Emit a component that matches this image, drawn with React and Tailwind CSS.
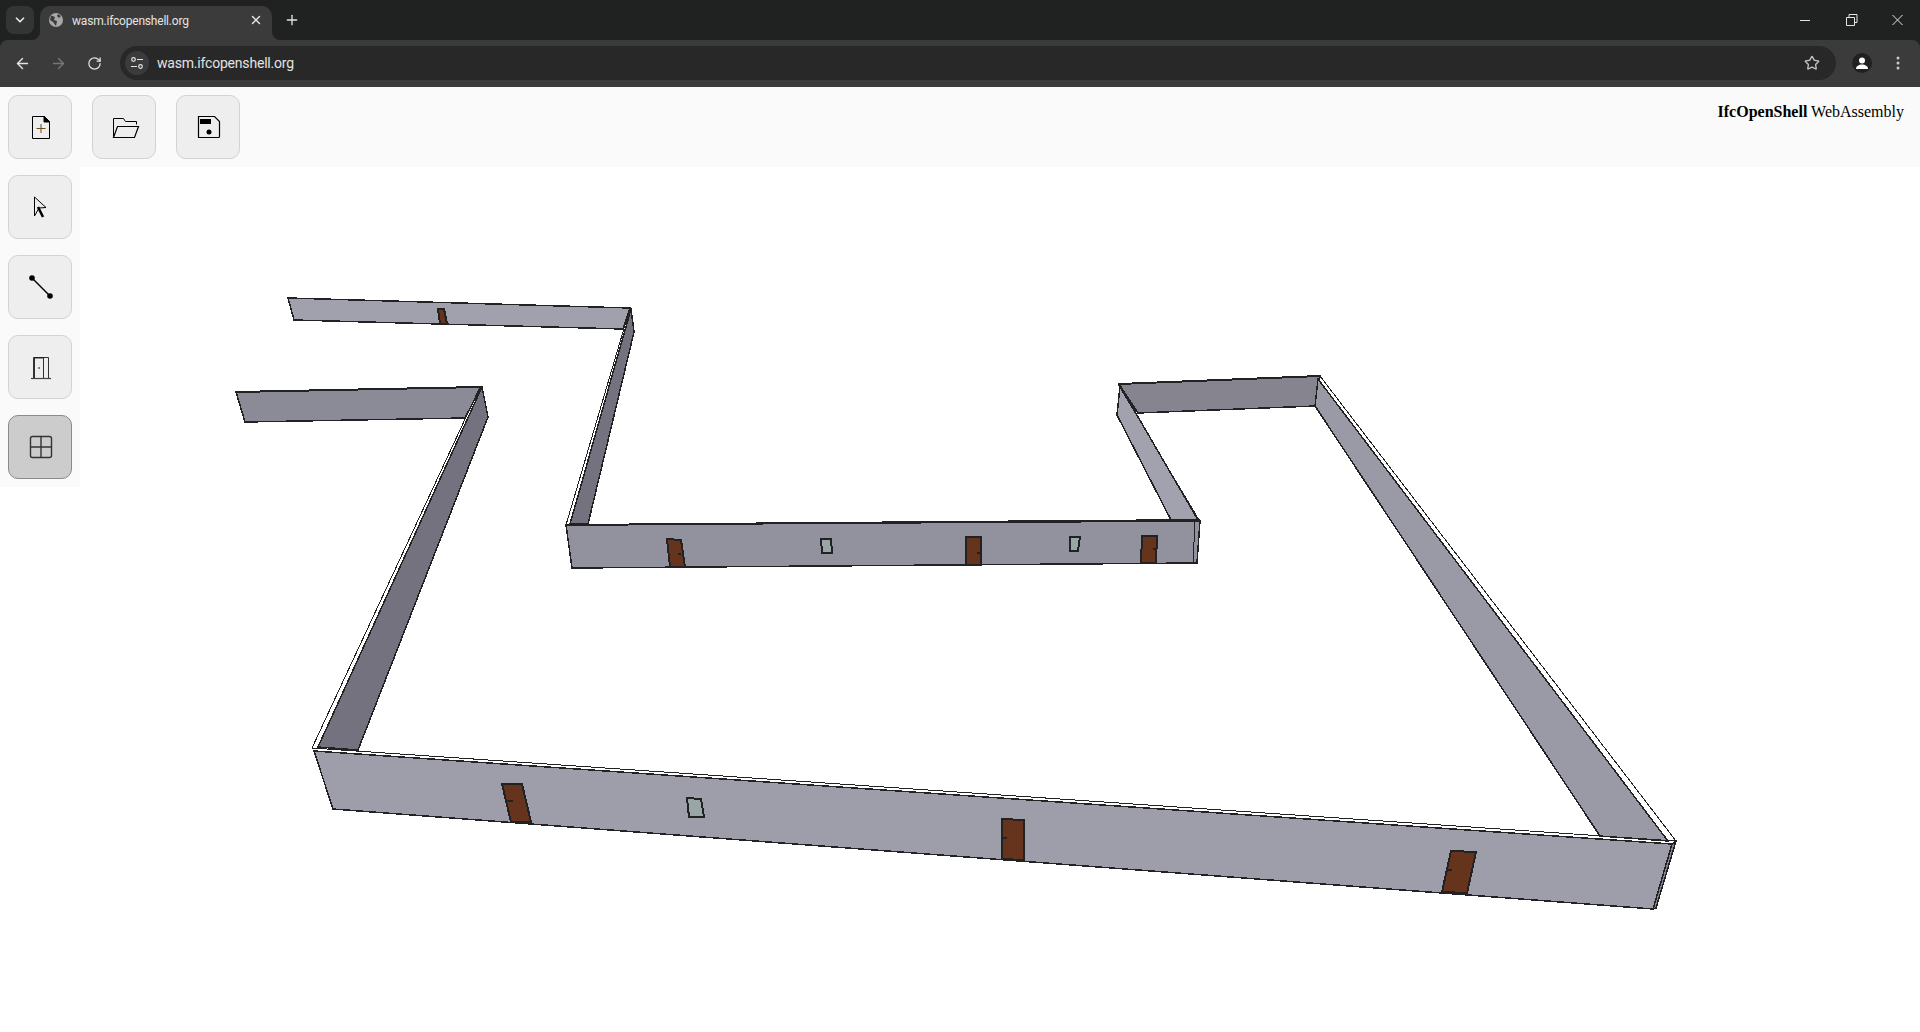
import {
  ArrowLeft,
  ArrowRight,
  ChevronDown,
  Plus,
  RotateCw,
  Star,
  X,
} from "lucide-react";

// wall faces of the model, drawn back to front
const walls = [
  { points: "288,298 294,320 623,329 630,308", fill: "#a1a0ad" },
  { points: "631,309 634,332 588,524 570,524", fill: "#73727e" },
  { points: "236,392 245,422 465,418 481,387", fill: "#8b8a97" },
  { points: "482,387 488,417 358,750 318,747", fill: "#73727e" },
  { points: "1119,384 1320,376 1315,406 1138,413", fill: "#85848f" },
  { points: "1120,386 1117,415 1171,520 1198,520", fill: "#a2a1ae" },
  { points: "1318,379 1315,406 1600,836 1668,841", fill: "#9a99a6" },
  { points: "566,525 572,568 1197,563 1200,521", fill: "#92919e" },
  { points: "314,751 1672,844 1653,909 333,809", fill: "#9e9daa" },
  { points: "1672,844 1676,841 1656,908 1653,909", fill: "#82818d" },
];

// outer edges, the sliver next to them stays white
const edges = [
  [630, 308, 566, 525, 1],
  [480, 387, 312, 748, 1],
  [1118, 384, 1199, 520, 1],
  [1320, 376, 1676, 841, 1],
  [312, 748, 1676, 841, 1],
  [1195, 522, 1193, 563, 1],
  [566, 525, 1200, 520, 2],
  [236, 392, 481, 387, 2],
  [1119, 384, 1320, 376, 2],
];

const doors = [
  { points: "438,309 444,309 447,324 440,324", handle: null },
  { points: "667,539 681,540 685,567 670,567", handle: [678, 554, 681, 554] },
  { points: "966,537 981,537 981,565 966,565", handle: [977, 553, 980, 553] },
  { points: "1142,536 1157,536 1156,563 1141,563", handle: [1153, 549, 1156, 549] },
  { points: "502,784 522,784 531,822 511,822", handle: [506, 801, 513, 801] },
  { points: "1002,819 1024,820 1024,860 1002,859", handle: [1002, 838, 1007, 838] },
  { points: "1451,851 1476,852 1467,893 1442,892", handle: [1447, 870, 1452, 870] },
];

const windows = [
  "821,539 831,539 832,553 822,553",
  "1070,537 1080,537 1078,551 1070,551",
  "687,798 701,799 704,817 689,817",
];

const BrowserBar = () => (
  <div className="h-[87px] shrink-0 bg-[#202222] text-[#e3e3e3]">
    <div className="flex h-10 items-end pl-1.5">
      <div className="mb-1.5 flex h-7 w-7 items-center justify-center rounded-lg bg-[#333535]">
        <ChevronDown size={14} strokeWidth={3} />
      </div>
      <div className="relative ml-1.5 flex h-[34px] w-[232px] items-center rounded-t-[10px] bg-[#3b3b3b] pb-[6px] pl-2 pr-[9px]">
        <svg width="8" height="8" viewBox="0 0 8 8" fill="#3b3b3b" className="absolute bottom-0 left-[-8px]">
          <path d="M8 0V8H0A8 8 0 0 0 8 0Z" />
        </svg>
        <svg width="8" height="8" viewBox="0 0 8 8" fill="#3b3b3b" className="absolute bottom-0 right-[-8px]">
          <path d="M0 0V8H8A8 8 0 0 1 0 0Z" />
        </svg>
        <svg width="16" height="16" viewBox="0 0 16 16" className="shrink-0">
          <circle cx="8" cy="8" r="7" fill="#a8a8a8" />
          <path d="M3 3.500 7 5 6 8 9 9 8 14 5 10 2 8ZM10 2 13 4 11 6 9 4Z" fill="#3b3b3b" />
        </svg>
        <span className="ml-2 flex-1 pt-[2px] font-['Roboto',sans-serif] text-xs tracking-[-0.2px]">wasm.ifcopenshell.org</span>
        <X size={14} strokeWidth={2.5} />
      </div>
      <Plus size={16} strokeWidth={2} className="mb-3 ml-3" />
      <div className="flex-1" />
      <svg width="130" height="40" viewBox="0 0 130 40" fill="none" stroke="#e3e3e3" strokeWidth="1">
        <path d="M10 20.500h10" />
        <path d="M56.500 17.500h8v8h-8zM59 17v-2.500h8v8h-2.500" />
        <path d="M102.500 15l10 10M112.500 15l-10 10" />
      </svg>
    </div>
    <div className="flex h-[47px] items-center rounded-t-lg bg-[#3b3b3b] pb-px">
      <ArrowLeft size={17} strokeWidth={2} className="ml-[14px]" />
      <ArrowRight size={17} strokeWidth={2} className="ml-[19px] text-[#767676]" />
      <RotateCw size={15} strokeWidth={2} className="ml-5" />
      <div className="ml-[18px] flex h-[34px] w-[1716px] items-center rounded-full bg-[#282828] pl-[5px]">
        <div className="flex h-6 w-6 items-center justify-center rounded-full bg-[#3b3b3b]">
          <svg width="14" height="14" viewBox="0 0 14 14" fill="none" stroke="#e3e3e3" strokeWidth="1.200">
            <circle cx="3.500" cy="3.500" r="1.800" />
            <path d="M7 3.500h6M1 10.500h6" />
            <circle cx="10.500" cy="10.500" r="1.800" />
          </svg>
        </div>
        <span className="ml-[8px] flex-1 font-['Roboto',sans-serif] text-sm tracking-[-0.2px]">wasm.ifcopenshell.org</span>
        <Star size={16} strokeWidth={2} className="mr-4 text-[#c4c4c4]" />
      </div>
      <div className="ml-4 flex h-5 w-5 items-center justify-center rounded-full bg-[#202020]">
        <svg width="14" height="14" viewBox="0 0 14 14" fill="#fff">
          <circle cx="7" cy="4.500" r="3" />
          <path d="M1 13c0-3 3-4.500 6-4.500s6 1.500 6 4.500z" />
        </svg>
      </div>
      <svg width="4" height="14" viewBox="0 0 4 14" fill="#c8c8c8" className="ml-[24px]">
        <circle cx="2" cy="2" r="1.500" />
        <circle cx="2" cy="7" r="1.500" />
        <circle cx="2" cy="12" r="1.500" />
      </svg>
    </div>
  </div>
);

const ToolButton = ({ active, children }) => (
  <button
    className={`flex h-16 w-16 shrink-0 items-center justify-center rounded-[10px] border ${
      active ? "border-[#8a8a8a] bg-[#cccccc]" : "border-[#d2d2d2] bg-[#eeeeee]"
    }`}
  >
    <svg width="32" height="32" viewBox="0 0 32 32" fill="none" stroke="#000" strokeWidth="1">
      {children}
    </svg>
  </button>
);

const App = () => {
  return (
    <div className="flex h-screen flex-col overflow-hidden bg-white">
      <BrowserBar />

      <main className="relative flex-1">
        <svg className="absolute inset-0 h-full w-full" viewBox="0 87 1920 945">
          <g shapeRendering="crispEdges">
            {walls.map((w) => (
              <polygon key={w.points} points={w.points} fill={w.fill} stroke="#222" strokeWidth="1.500" strokeLinejoin="round" />
            ))}
            {edges.map((e) => (
              <line key={e.join()} x1={e[0]} y1={e[1]} x2={e[2]} y2={e[3]} stroke="#222" strokeWidth={e[4]} />
            ))}
            {doors.map((d) => (
              <g key={d.points}>
                <polygon points={d.points} fill="#66341c" stroke="#222" strokeWidth="2" />
                {d.handle && (
                  <line x1={d.handle[0]} y1={d.handle[1]} x2={d.handle[2]} y2={d.handle[3]} stroke="#222" strokeWidth="1.500" />
                )}
              </g>
            ))}
            {windows.map((d) => (
              <polygon key={d} points={d} fill="#9aa5a5" stroke="#222" strokeWidth="2" />
            ))}
          </g>
        </svg>

        <div className="relative flex h-20 items-start gap-5 bg-[#fafafa] p-2">
          <ToolButton>
            <path d="M8.500 5.500h12l5 5v17h-17z" />
            <path d="M20 5l6 6h-6z" fill="#000" />
            <path d="M17 13v9M12.500 17.500h9" stroke="#6b4a1e" />
          </ToolButton>
          <ToolButton>
            <path d="M5.500 25.500v-18h10l2 3h11v3" />
            <path d="M5.500 26.500l4-11h21l-4 11z" strokeWidth="1.200" />
          </ToolButton>
          <ToolButton>
            <path d="M6.500 5.500h16l5 5v15a1 1 0 0 1-1 1h-20z" strokeWidth="1.200" />
            <path d="M8 8h11v5H8z" fill="#000" stroke="none" />
            <circle cx="17" cy="21" r="2.500" fill="#000" stroke="none" />
          </ToolButton>
          <div className="flex-1" />
          <p className="pr-2 pt-[5px] font-['Liberation_Serif',serif] text-base text-black">
            <b>IfcOpenShell</b> WebAssembly
          </p>
        </div>

        <div className="relative flex w-20 flex-col gap-4 bg-[#fafafa] p-2">
          <ToolButton>
            <path d="M10.500 6v19l4.500-8 7-.5z" />
            <path d="M14 16l5 10" strokeWidth="2.500" />
          </ToolButton>
          <ToolButton>
            <path d="M8 7l18 18" strokeWidth="1.500" />
            <circle cx="8" cy="7" r="2.800" fill="#000" stroke="none" />
            <circle cx="26" cy="25" r="2.800" fill="#000" stroke="none" />
          </ToolButton>
          <ToolButton>
            <path d="M9.500 27V6.500h15V27" strokeWidth=".8" />
            <path d="M10.500 27V7l9 0V27" strokeWidth=".8" />
            <path d="M7 27.500h20" strokeWidth="1.200" stroke="#444" />
            <circle cx="15" cy="17" r=".8" fill="#000" stroke="none" />
          </ToolButton>
          <ToolButton active>
            <rect x="6.500" y="5.500" width="21" height="21" rx="2" stroke="#333" strokeWidth="1.400" />
            <path d="M17 5.500v21M6.500 16h21" stroke="#333" strokeWidth="1.400" />
          </ToolButton>
        </div>
      </main>
    </div>
  );
};

export default App;
